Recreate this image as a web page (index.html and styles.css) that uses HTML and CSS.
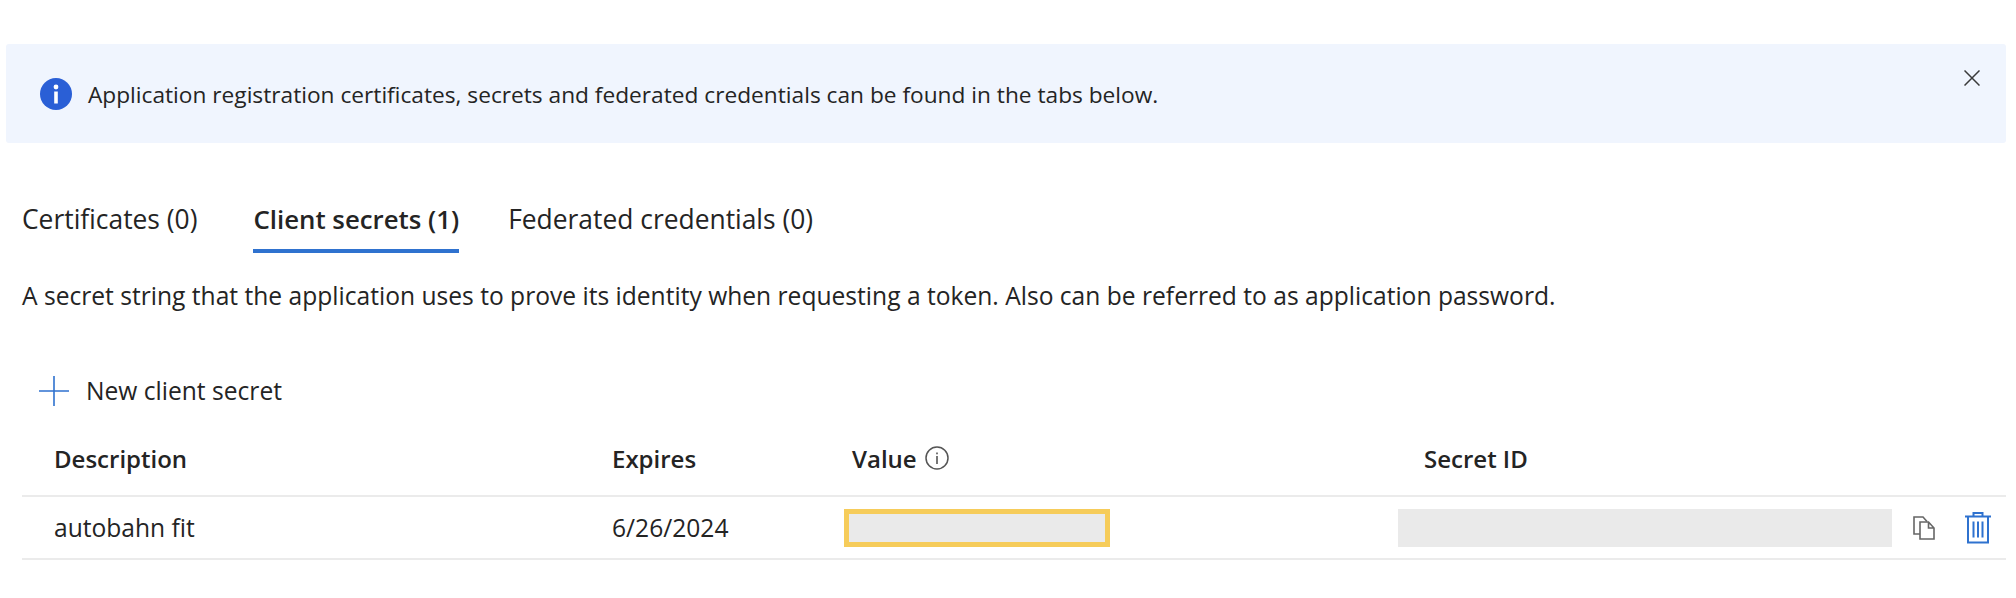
FILE: index.html
```html
<!DOCTYPE html>
<html lang="en">
<head>
  <meta charset="UTF-8">
  <title>Certificates &amp; secrets</title>
  <link rel="stylesheet" href="styles.css">
</head>
<body>

  <div class="banner">
    <svg class="banner-icon" width="32" height="32" viewBox="0 0 32 32">
      <circle cx="16" cy="16" r="16" fill="#2a5fd6"/>
      <circle cx="16" cy="9" r="2.4" fill="#fff"/>
      <rect x="14.2" y="13.5" width="3.6" height="12" fill="#fff"/>
    </svg>
    <span class="banner-text">Application registration certificates, secrets and federated credentials can be found in the tabs below.</span>
    <svg class="banner-close" width="16" height="16" viewBox="0 0 16 16">
      <path d="M0.5 0.5 L15.5 15.5 M15.5 0.5 L0.5 15.5" stroke="#3a3a3a" stroke-width="1.5" fill="none"/>
    </svg>
  </div>

  <div class="tabs">
    <div class="tab">Certificates (0)</div>
    <div class="tab active">Client secrets (1)</div>
    <div class="tab">Federated credentials (0)</div>
  </div>

  <p class="intro">A secret string that the application uses to prove its identity when requesting a token. Also can be referred to as application password.</p>

  <div class="toolbar">
    <svg width="30" height="30" viewBox="0 0 30 30">
      <path d="M15 0 V30 M0 15 H30" stroke="#2f72cf" stroke-width="1.6" fill="none"/>
    </svg>
    <span>New client secret</span>
  </div>

  <div class="row head">
    <div>Description</div>
    <div>Expires</div>
    <div class="value-head">
      Value
      <svg width="24" height="24" viewBox="0 0 24 24">
        <circle cx="12" cy="12" r="11" stroke="#555" stroke-width="1.5" fill="none"/>
        <rect x="11.2" y="10" width="1.6" height="8" fill="#555"/>
        <rect x="11.2" y="6.5" width="1.6" height="1.8" fill="#555"/>
      </svg>
    </div>
    <div>Secret ID</div>
    <div></div>
  </div>

  <div class="row body">
    <div>autobahn fit</div>
    <div>6/26/2024</div>
    <div class="mask mask-value"></div>
    <div class="mask mask-id"></div>
    <div class="actions">
      <svg class="copy" width="22" height="24" viewBox="0 0 22 24">
        <path d="M7 18 H1 V1 H10 L14 5.5" stroke="#666" stroke-width="1.6" fill="none"/>
        <path d="M7 6 H15.5 L21 12 V23 H7 Z M15.5 6 V12 H21" stroke="#666" stroke-width="1.6" fill="#fff"/>
      </svg>
      <svg class="trash" width="26" height="32" viewBox="0 0 26 32">
        <path d="M0 4.5 H26 M8.5 4 V1 H17.5 V4" stroke="#2f72cf" stroke-width="2" fill="none"/>
        <path d="M3 5 V30.5 H23 V5" stroke="#2f72cf" stroke-width="2" fill="none"/>
        <path d="M8.5 9.5 V25.5 M13 9.5 V25.5 M17.5 9.5 V25.5" stroke="#2f72cf" stroke-width="2" fill="none"/>
      </svg>
    </div>
  </div>

</body>
</html>
```

FILE: styles.css
```css
body {
  margin: 0;
  background: #ffffff;
  font-family: 'Open Sans', sans-serif;
  font-size: 24.6px;
  color: #242424;
}

.banner {
  display: flex;
  align-items: center;
  height: 99px;
  margin: 44px 10px 0 6px;
  padding: 0 26px 0 34px;
  background: #f0f5fe;
  border-radius: 3px;
  box-sizing: border-box;
  font-size: 22.7px;
}

.banner-text {
  margin-left: 16px;
  padding-top: 2px;
  flex: 1;
}

.banner-close {
  align-self: flex-start;
  margin-top: 26px;
}

.tabs {
  display: flex;
  gap: 49px;
  margin: 58px 0 0 22px;
  font-size: 26.4px;
}

.tab {
  padding-bottom: 12px;
  border-bottom: 4px solid transparent;
}

.tab:first-child {
  margin-right: 7px;
}

.tab.active {
  font-size: 25.8px;
  font-weight: 600;
  border-bottom-color: #2f72cf;
}

.intro {
  margin: 26px 0 0 22px;
}

.toolbar {
  display: flex;
  align-items: center;
  gap: 17px;
  margin: 62px 0 0 39px;
}

.row {
  display: grid;
  grid-template-columns: 558px 240px 572px 468px 1fr;
  align-items: center;
  margin: 0 10px 0 22px;
  padding-left: 32px;
}

.head {
  height: 76px;
  margin-top: 14px;
  border-bottom: 2px solid #ebebeb;
  box-sizing: border-box;
  font-size: 24px;
  font-weight: 600;
}

.value-head {
  display: flex;
  align-items: center;
  gap: 8px;
}

.body {
  height: 61px;
  border-bottom: 2px solid #ebebeb;
}

.mask {
  height: 38px;
  background: #eaeaea;
  box-sizing: border-box;
}

.mask-value {
  width: 266px;
  margin-left: -8px;
  border: 5px solid #f6cc5a;
}

.mask-id {
  margin-left: -26px;
}

.actions {
  display: flex;
  align-items: center;
  gap: 30px;
  margin-left: 21px;
}
```
